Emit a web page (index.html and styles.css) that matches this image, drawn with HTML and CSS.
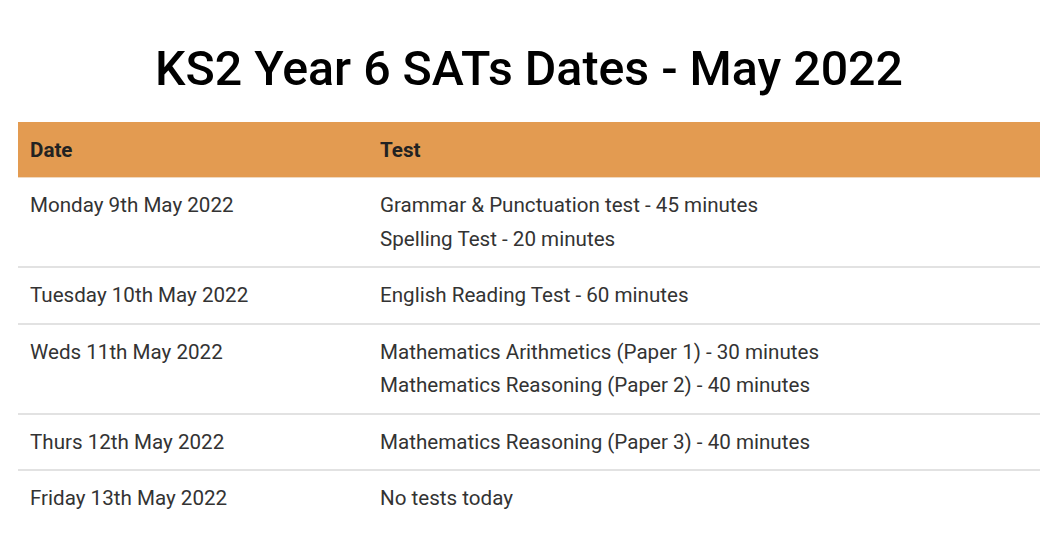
FILE: index.html
```html
<!DOCTYPE html>
<html lang="en">
<head>
<meta charset="utf-8">
<title>KS2 Year 6 SATs Dates - May 2022</title>
<link rel="stylesheet" href="styles.css">
</head>
<body>
<main class="page">
  <h1 class="title">KS2 Year 6 SATs Dates - May 2022</h1>
  <table class="dates">
    <thead>
      <tr><th class="col-date">Date</th><th>Test</th></tr>
    </thead>
    <tbody>
      <tr><td>Monday 9th May 2022</td><td><p>Grammar &amp; Punctuation test - 45 minutes</p><p>Spelling Test - 20 minutes</p></td></tr>
      <tr><td>Tuesday 10th May 2022</td><td><p>English Reading Test - 60 minutes</p></td></tr>
      <tr><td>Weds 11th May 2022</td><td><p>Mathematics Arithmetics (Paper 1) - 30 minutes</p><p>Mathematics Reasoning (Paper 2) - 40 minutes</p></td></tr>
      <tr><td>Thurs 12th May 2022</td><td><p>Mathematics Reasoning (Paper 3) - 40 minutes</p></td></tr>
      <tr><td>Friday 13th May 2022</td><td><p>No tests today</p></td></tr>
    </tbody>
  </table>
</main>
</body>
</html>
```
FILE: styles.css
```css
html, body {
  margin: 0;
  padding: 0;
  background: #ffffff;
}
body {
  font-family: Roboto, "Liberation Sans", Arial, sans-serif;
  color: #333333;
}
.page {
  padding: 38px 14px 0 18px;
}
.title {
  margin: 0 0 22px 0;
  text-align: center;
  font-size: 48.3px;
  line-height: 62px;
  font-weight: 500;
  color: #000000;
}
.dates {
  width: 100%;
  border-collapse: collapse;
  font-size: 20.6px;
}
.dates th {
  background: #e39b51;
  color: #222222;
  font-weight: 700;
  text-align: left;
  padding: 0 12px;
  height: 55px;
  border-bottom: 1px solid #f0d9c0;
}
.dates th.col-date {
  width: 326px;
}
.dates td {
  vertical-align: top;
  padding: 15px 12px 14.5px;
  border-bottom: 2px solid #e2e2e2;
  line-height: 25px;
}
.dates tbody tr:last-child td {
  border-bottom: none;
}
.dates p {
  margin: 0;
}
.dates p + p {
  margin-top: 8.5px;
}
```
